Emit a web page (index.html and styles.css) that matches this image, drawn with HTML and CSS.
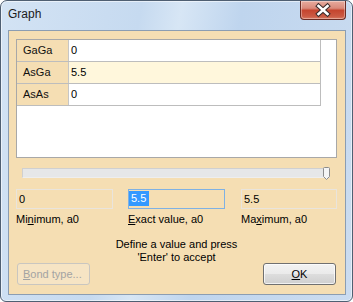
FILE: index.html
```html
<!DOCTYPE html>
<html>
<head>
<meta charset="utf-8">
<link rel="stylesheet" href="styles.css">
</head>
<body>
<div class="window">
  <div class="titlebar">
    <span class="title">Graph</span>
    <div class="close">
      <svg width="44" height="18" viewBox="0 0 44 18">
        <path d="M17.5 5 L26.5 13 M26.5 5 L17.5 13" stroke="#3a2b2b" stroke-width="4.6" stroke-linecap="square"/>
        <path d="M17.5 5 L26.5 13 M26.5 5 L17.5 13" stroke="#ffffff" stroke-width="2.6" stroke-linecap="square"/>
      </svg>
    </div>
  </div>
  <div class="client">
    <div class="listbox">
      <div class="grid">
        <div class="row"><div class="hdr">GaGa</div><div class="val">0</div></div>
        <div class="row sel"><div class="hdr">AsGa</div><div class="val">5.5</div></div>
        <div class="row"><div class="hdr">AsAs</div><div class="val">0</div></div>
      </div>
    </div>
    <div class="slider">
      <div class="track">
        <span class="thumb">
          <svg width="7" height="13" viewBox="0 0 7 13">
            <path d="M0.5 1.5 Q0.5 0.5 1.5 0.5 H5.5 Q6.5 0.5 6.5 1.5 V9.5 L3.5 12.5 L0.5 9.5 Z" fill="#f4f4f4" stroke="#8c8c8c"/>
          </svg>
        </span>
      </div>
    </div>
    <div class="fields">
      <div class="field">
        <div class="box">0</div>
        <div class="label">Mi<u>n</u>imum, a0</div>
      </div>
      <div class="field">
        <div class="box focus"><span class="selected">5.5</span></div>
        <div class="label"><u>E</u>xact value, a0</div>
      </div>
      <div class="field">
        <div class="box">5.5</div>
        <div class="label">Ma<u>x</u>imum, a0</div>
      </div>
    </div>
    <div class="message">Define a value and press<br>'Enter' to accept</div>
    <div class="buttons">
      <div class="btn disabled"><u>B</u>ond type...</div>
      <div class="btn ok"><u>O</u>K</div>
    </div>
  </div>
</div>
</body>
</html>
```

FILE: styles.css
```css
html, body {
  margin: 0;
  padding: 0;
  background: #ffffff;
}

body {
  font-family: "Liberation Sans", Arial, sans-serif;
  font-size: 11px;
  color: #000;
}

.window {
  width: 353px;
  height: 302px;
  box-sizing: border-box;
  border: 1px solid #4f5f72;
  border-radius: 7px 7px 6px 6px;
  background: linear-gradient(100deg, #d3e3f4 0%, #c6daf0 35%, #d7e6f5 45%, #bfd5ee 60%, #cbdcf0 100%);
  box-shadow: inset 0 0 0 1px rgba(255, 255, 255, 0.55);
  display: flex;
  flex-direction: column;
  padding: 0 6px 6px 7px;
}

.titlebar {
  height: 29px;
  display: flex;
  align-items: flex-start;
  flex: none;
}

.title {
  font-family: "Liberation Sans", Arial, sans-serif;
  font-size: 12px;
  line-height: 16px;
  padding-top: 5px;
  color: #1b1b1b;
}

.close {
  margin-left: auto;
  width: 46px;
  height: 19px;
  box-sizing: border-box;
  border: 1px solid #6a2b24;
  border-top: none;
  border-radius: 0 0 4px 4px;
  background: linear-gradient(to bottom, #e7ab9e 0%, #d98a7b 40%, #c5452f 52%, #cb5a44 85%, #d97a62 100%);
  box-shadow: inset 0 0 0 1px rgba(255, 255, 255, 0.35);
  display: flex;
  align-items: center;
  justify-content: center;
}

.close svg {
  display: block;
}

.client {
  flex: 1;
  background: #f5deb3;
  border: 1px solid #8b9db2;
  padding: 8px 8px 0 7px;
  display: flex;
  flex-direction: column;
}

.listbox {
  height: 119px;
  box-sizing: border-box;
  border: 1px solid #a8a8a8;
  background: #ffffff;
  flex: none;
}

.grid {
  width: 304px;
  box-sizing: border-box;
  border-right: 1px solid #bdbdbd;
}

.row {
  display: flex;
  height: 22px;
  box-sizing: border-box;
  border-bottom: 1px solid #bdbdbd;
  line-height: 21px;
}

.hdr {
  width: 52px;
  box-sizing: border-box;
  background: #f5deb3;
  border-right: 1px solid #c6c6c6;
  padding-left: 6px;
  color: #101010;
}

.val {
  flex: 1;
  padding-left: 2px;
  color: #000;
}

.row.sel .val {
  background: #fff7dc;
}

.slider {
  margin: 10px 7px 0 6px;
  flex: none;
}

.track {
  position: relative;
  height: 10px;
  box-sizing: border-box;
  border: 1px solid #d0d0d0;
  border-bottom-color: #eeeeee;
  background: #e6e7e8;
}

.thumb {
  position: absolute;
  right: -1px;
  top: -2px;
  line-height: 0;
}

.fields {
  display: grid;
  grid-template-columns: 112px 113px 1fr;
  margin-top: 11px;
  flex: none;
}

.box {
  width: 97px;
  height: 20px;
  box-sizing: border-box;
  border: 1px solid #e9e4dc;
  padding-left: 2px;
  line-height: 18px;
  background: #f5deb3;
}

.field:last-child .box {
  width: 96px;
}

.box.focus {
  border-color: #7fb1e3;
  padding-left: 0;
}

.selected {
  display: inline-block;
  background: #3399ff;
  color: #ffffff;
  line-height: 15px;
  padding: 0 3px 0 2px;
  margin-top: 1px;
  vertical-align: top;
}

.label {
  margin-top: 4px;
  line-height: 13px;
}

u {
  text-decoration: underline;
  text-underline-offset: 1px;
}

.message {
  margin-top: 12px;
  text-align: center;
  line-height: 13px;
  flex: none;
}

.buttons {
  display: flex;
  justify-content: space-between;
  margin: -1px 1px 0 1px;
  flex: none;
}

.btn {
  width: 73px;
  height: 22px;
  box-sizing: border-box;
  border-radius: 3px;
  text-align: center;
  line-height: 20px;
}

.btn.disabled {
  border: 1px solid #c9c6c0;
  background: #f6e4c4;
  color: #a3a3a3;
  text-align: left;
  padding-left: 5px;
}

.btn.ok {
  border: 1px solid #707070;
  background: linear-gradient(to bottom, #f2f2f2 0%, #ebebeb 48%, #dddddd 52%, #cfcfcf 100%);
  box-shadow: inset 0 0 0 1px rgba(255, 255, 255, 0.7);
  color: #000;
}
```
